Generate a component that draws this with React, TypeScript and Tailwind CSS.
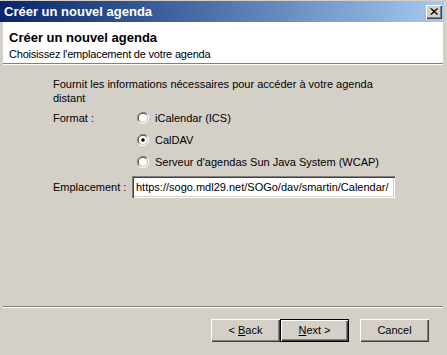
import React from "react";

function Radio({ checked }: { checked?: boolean }) {
  return (
    <svg width="12" height="12" viewBox="0 0 12 12" className="shrink-0">
      <path d="M10.5 2.5 A5 5 0 0 0 1.5 9.5" stroke="#808080" strokeWidth="1" fill="none" />
      <path d="M9.5 3 A4 4 0 0 0 2.5 8.7" stroke="#404040" strokeWidth="1" fill="none" />
      <circle cx="6" cy="6" r="4" fill="#ffffff" />
      <path d="M1.8 9.8 A5.2 5.2 0 0 0 10.2 2.2" stroke="#ffffff" strokeWidth="1" fill="none" />
      <path d="M2.8 9 A4.2 4.2 0 0 0 9.2 3" stroke="#d4d0c8" strokeWidth="1" fill="none" />
      {checked && <circle cx="6" cy="6" r="1.8" fill="#000000" />}
    </svg>
  );
}

function Btn({ children, def }: { children: React.ReactNode; def?: boolean }) {
  return (
    <div
      className={
        "w-[69px] h-[23px] flex items-center justify-center bg-[#d4d0c8] " +
        (def
          ? "border border-[#000000] shadow-[inset_1px_1px_0_#ffffff,inset_-1px_-1px_0_#404040,inset_-2px_-2px_0_#808080]"
          : "shadow-[inset_1px_1px_0_#ffffff,inset_-1px_-1px_0_#404040,inset_-2px_-2px_0_#808080]")
      }
    >
      <span className="text-[11px] text-black leading-none">{children}</span>
    </div>
  );
}

export default function App() {
  return (
    <div
      className="w-[447px] h-[355px] bg-[#d4d0c8] overflow-hidden flex flex-col text-black"
      style={{ fontFamily: "Tahoma, 'Liberation Sans', Arial, sans-serif" }}
    >
      {/* title bar */}
      <div className="pt-[1px] pr-[3px] flex flex-col">
        <div className="h-[21px] flex items-center justify-between pl-[4px] pr-[2px] bg-gradient-to-r from-[#0a246a] to-[#a6caf0]">
          <span className="text-white font-bold text-[13px] leading-none">Créer un nouvel agenda</span>
          <div className="w-[16px] h-[14px] bg-[#d4d0c8] flex items-center justify-center shadow-[inset_1px_1px_0_#ffffff,inset_-1px_-1px_0_#404040,inset_-2px_-2px_0_#808080]">
            <svg width="8" height="7" viewBox="0 0 8 7">
              <path d="M0.5 0.5 L7 6.5 M1.5 0.5 L8 6.5 M7 0.5 L0.5 6.5 M8 0.5 L1.5 6.5" stroke="#000" strokeWidth="1" />
            </svg>
          </div>
        </div>
      </div>
      {/* header */}
      <div className="pl-[3px] pr-[4px]">
        <div className="h-[42px] bg-white flex flex-col pl-[6px] pt-[8px] border-b border-[#808080]">
          <span className="font-bold text-[13px] leading-[16px]">Créer un nouvel agenda</span>
          <span className="text-[11px] leading-[16px] tracking-[-0.2px]">Choisissez l'emplacement de votre agenda</span>
        </div>
        <div className="h-[1px] bg-white" />
      </div>
      {/* content */}
      <div className="pl-[53px] pt-[12px] flex flex-col text-[11px]">
        <div className="leading-[14px] w-[355px]">
          Fournit les informations nécessaires pour accéder à votre agenda distant
        </div>
        <div className="flex mt-[2px]">
          <div className="w-[84px] h-[22px] flex items-center">Format :</div>
          <div className="flex flex-col">
            <div className="h-[22px] flex items-center gap-[6px]"><Radio /><span>iCalendar (ICS)</span></div>
            <div className="h-[22px] flex items-center gap-[6px]"><Radio checked /><span>CalDAV</span></div>
            <div className="h-[22px] flex items-center gap-[6px]"><Radio /><span>Serveur d'agendas Sun Java System (WCAP)</span></div>
          </div>
        </div>
        <div className="flex items-center mt-[3px]">
          <div className="w-[79px]">Emplacement :</div>
          <div className="w-[263px] h-[22px] bg-white flex items-center pl-[4px] overflow-hidden whitespace-nowrap shadow-[inset_1px_1px_0_#808080,inset_2px_2px_0_#404040,inset_-1px_-1px_0_#ffffff,inset_-2px_-2px_0_#d4d0c8]">
            https://sogo.mdl29.net/SOGo/dav/smartin/Calendar/
          </div>
        </div>
      </div>
      <div className="flex-1" />
      {/* separator */}
      <div className="pl-[3px] pr-[4px]">
        <div className="h-[1px] bg-[#808080]" />
        <div className="h-[1px] bg-white" />
      </div>
      <div className="flex pl-[211px] pt-[11px] pb-[13px]">
        <Btn>&lt; <u>B</u>ack</Btn>
        <Btn def><u>N</u>ext &gt;</Btn>
        <div className="w-[11px]" />
        <Btn>Cancel</Btn>
      </div>
    </div>
  );
}
